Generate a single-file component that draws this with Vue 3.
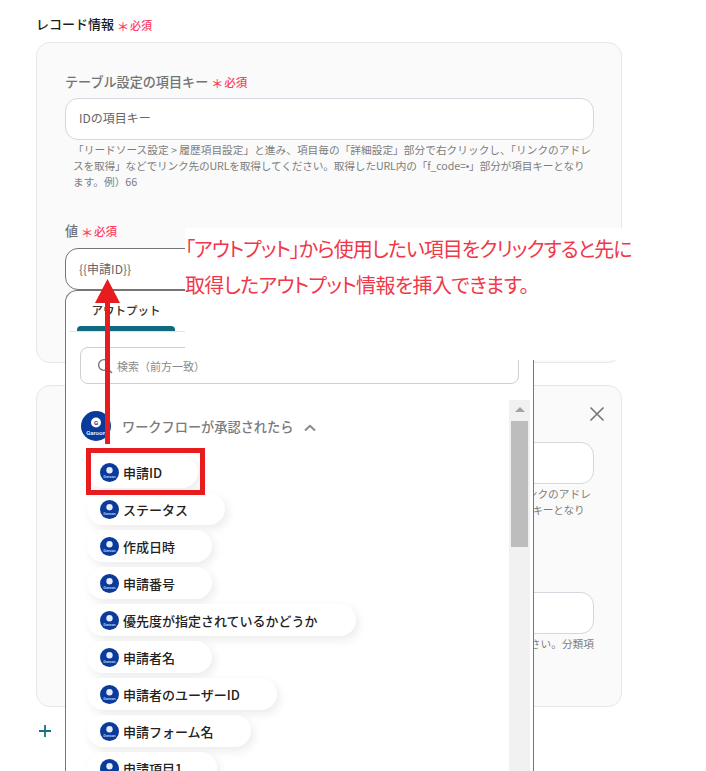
<script setup>
const helpLines = [
  '「リードソース設定 > 履歴項目設定」と進み、項目毎の「詳細設定」部分で右クリックし、「リンクのアドレ',
  'スを取得」などでリンク先のURLを取得してください。取得したURL内の「f_code=•」部分が項目キーとなり',
  'ます。例）66',
]
const pills = [
  { text: '申請ID', w: 111 },
  { text: 'ステータス', w: 138 },
  { text: '作成日時', w: 125 },
  { text: '申請番号', w: 125 },
  { text: '優先度が指定されているかどうか', w: 269 },
  { text: '申請者名', w: 125 },
  { text: '申請者のユーザーID', w: 190 },
  { text: '申請フォーム名', w: 164 },
  { text: '申請項目1', w: 130 },
]
</script>

<template>
  <div class="page">
    <div class="title">レコード情報<span class="req"><i>＊</i>必須</span></div>
    <section class="card">
      <div class="label">テーブル設定の項目キー<span class="req"><i>＊</i>必須</span></div>
      <div class="input">IDの項目キー</div>
      <p class="help"><span v-for="l in helpLines" :key="l">{{ l }}</span></p>
      <div class="label second">値<span class="req"><i>＊</i>必須</span></div>
      <div class="input focused">{{ '{' + '{申請ID}' + '}' }}</div>
    </section>

    <section class="card card2">
      <svg class="close" width="16" height="16" viewBox="0 0 16 16"><path d="M1.5 1.5 14.5 14.5M14.5 1.5 1.5 14.5" stroke="#757575" stroke-width="1.6" fill="none"/></svg>
      <div class="input"></div>
      <p class="help"><span v-for="l in helpLines" :key="l">{{ l }}</span></p>
      <div class="input in3"></div>
      <p class="help h3">分類項目の値を入力してください。分類項</p>
    </section>

    <svg class="plus" width="14" height="14" viewBox="0 0 14 14"><path d="M7 1V13M1 7H13" stroke="#1a6f80" stroke-width="1.8" fill="none"/></svg>

    <div class="dropdown">
      <div class="tab"><span>アウトプット</span></div>
      <div class="search">
        <svg width="16" height="16" viewBox="0 0 16 16"><circle cx="7" cy="7" r="5.4" stroke="#777" stroke-width="1.4" fill="none"/><path d="M11 11 15 15" stroke="#777" stroke-width="1.4"/></svg>
        <span>検索（前方一致）</span>
      </div>
      <div class="list">
        <div class="group">
          <svg class="logo big" viewBox="0 0 30 30"><circle cx="15" cy="15" r="15" fill="#0a3a9c"/><circle cx="15" cy="11.5" r="5" fill="#fff"/><text x="15" y="13.5" text-anchor="middle" font-size="6" font-weight="700" fill="#0a3a9c" font-family="Roboto, sans-serif">G</text><text x="15" y="24" text-anchor="middle" font-size="6" fill="#fff" font-family="Roboto, sans-serif">Garoon</text></svg>
          <span>ワークフローが承認されたら</span>
          <svg class="chev" width="12" height="8" viewBox="0 0 12 8"><path d="M1 6.5 6 1.8 11 6.5" stroke="#888" stroke-width="2" fill="none"/></svg>
        </div>
        <div class="pills">
          <div v-for="p in pills" :key="p.text" class="pill" :style="{ width: p.w + 'px' }">
            <svg class="logo" viewBox="0 0 30 30"><circle cx="15" cy="15" r="15" fill="#0a3a9c"/><circle cx="15" cy="11.5" r="5" fill="#e8ecf6"/><text x="15" y="24" text-anchor="middle" font-size="6" fill="#cdd6ee" font-family="Roboto, sans-serif">Garoon</text></svg>
            <span>{{ p.text }}</span>
          </div>
        </div>
        <div class="scrollbar">
          <div class="up"></div>
          <div class="thumb"></div>
        </div>
      </div>
    </div>

    <div class="note">
      <div class="l1">「アウトプット」から使用したい項目をクリックすると先に</div>
      <div class="l2">取得したアウトプット情報を挿入できます。</div>
    </div>

    <div class="redbox"></div>
    <svg class="arrow" width="26" height="166" viewBox="0 0 26 166"><path d="M10 24H15V165H10Z" fill="#e71c1f"/><path d="M12.5 0 25 24H0Z" fill="#e71c1f"/></svg>
  </div>
</template>

<style scoped>
.page {
  position: relative;
  width: 706px;
  height: 771px;
  overflow: hidden;
  background: #fff;
  padding: 15px 0 0 36px;
  box-sizing: border-box;
  font-family: "Noto Sans CJK JP", "Noto Sans", sans-serif;
  color: #333;
}
.title {
  font-size: 13px;
  font-weight: 500;
  line-height: 18px;
  color: #1c1c1c;
  height: 27px;
  display: flex;
  align-items: flex-start;
}
.req {
  color: #ff3d5e;
  font-size: 11px;
  font-weight: 500;
  margin-left: 3px;
  line-height: 18px;
  padding-top: 1px;
}
.req i {
  font-style: normal;
  display: inline-block;
  margin-right: 1px;
  font-size: 12px;
  position: relative;
  top: 2px;
}
.card {
  position: relative;
  width: 586px;
  height: 321px;
  box-sizing: border-box;
  border: 1px solid #e6e7ea;
  border-radius: 14px;
  background: #fafafa;
  padding: 29px 28px 0;
}
.card2 {
  height: 322px;
  margin-top: 22px;
  padding-top: 56px;
}
.label {
  font-size: 13.1px;
  font-weight: 500;
  line-height: 20px;
  color: #737373;
  display: flex;
  height: 26px;
}
.label .req { font-size: 11.5px; }
.label.second { margin-top: 31px; height: 27px; }
.input {
  width: 529px;
  height: 42px;
  box-sizing: border-box;
  border: 1px solid #d3d7de;
  border-radius: 13px;
  background: #fff;
  padding: 0 13px;
  font-size: 12px;
  line-height: 38px;
  color: #666;
}
.input.focused { border-color: #757575; line-height: 40px; }
.help {
  margin: 2px 0 0;
  padding-left: 8px;
  height: 48px;
  font-size: 10.7px;
  line-height: 16px;
  color: #7d7d7d;
  white-space: nowrap;
}
.help span { display: block; }
.help span:nth-child(2) { letter-spacing: -0.17px; }
.in3 { margin-top: 58px; }
.h3 { text-align: right; width: 529px; padding: 0; height: 16px; }
.close { position: absolute; right: 16px; top: 20px; }
.plus { position: absolute; left: 38px; top: 724px; }

.dropdown {
  position: absolute;
  left: 65px;
  top: 290px;
  width: 469px;
  height: 500px;
  box-sizing: border-box;
  background: #fff;
  border: 1px solid #757575;
  border-bottom: 0;
  border-radius: 12px 12px 0 0;
}
.tab {
  height: 40px;
  margin: 0 3px;
  border-bottom: 1px solid #e4e4e4;
}
.tab span {
  display: block;
  position: relative;
  width: 98px;
  margin-left: 8px;
  height: 40px;
  text-align: center;
  line-height: 38px;
  font-size: 11.5px;
  font-weight: 500;
  color: #333;
}
.tab span::after {
  content: "";
  position: absolute;
  left: 0;
  right: 0;
  bottom: 0;
  height: 5px;
  background: #0f6a80;
  border-radius: 4px 4px 0 0;
}
.search {
  margin: 15px 0 0 14px;
  width: 439px;
  height: 37px;
  box-sizing: border-box;
  border: 1px solid #cfcfcf;
  border-radius: 8px;
  display: flex;
  align-items: center;
  gap: 4px;
  padding-left: 16px;
  font-size: 11px;
  color: #8a8a8a;
}
.list { position: relative; }
.group {
  display: flex;
  align-items: center;
  margin: 27px 0 0 15px;
  height: 30px;
  font-size: 13.2px;
  font-weight: 500;
  color: #7a7a7a;
}
.group span { margin-left: 11px; margin-right: 11px; }
.chev { position: relative; top: 2px; }
.logo { width: 19px; height: 19px; flex: none; }
.logo.big { width: 30px; height: 30px; }
.pills {
  margin: 15px 0 0 21px;
  display: flex;
  flex-direction: column;
  gap: 5px;
}
.pill {
  height: 32px;
  box-sizing: border-box;
  border-radius: 16px;
  background: #fff;
  box-shadow: 3px 4px 10px rgba(0, 0, 0, 0.08);
  display: flex;
  align-items: center;
  padding-left: 13px;
  gap: 4px;
  font-size: 13px;
  font-weight: 500;
  color: #222;
  white-space: nowrap;
}
.scrollbar {
  position: absolute;
  left: 443px;
  top: 15px;
  margin-top: 0;
  width: 21px;
  height: 400px;
  background: #f1f1f1;
  transform: translateY(-26px);
}
.up {
  width: 0;
  height: 0;
  margin: 7px auto 0;
  border-left: 5px solid transparent;
  border-right: 5px solid transparent;
  border-bottom: 5px solid #a3a3a3;
}
.thumb {
  width: 17px;
  height: 126px;
  margin: 9px auto 0;
  background: #bdbdbd;
}
.note {
  position: absolute;
  left: 185px;
  top: 228px;
  width: 455px;
  height: 132px;
  background: #fff;
  color: #f0384a;
  font-size: 20px;
  line-height: 36px;
  padding-top: 3px;
  box-sizing: border-box;
  font-feature-settings: "palt";
  white-space: nowrap;
}
.l1 { letter-spacing: -0.96px; }
.l2 { letter-spacing: -0.65px; }
.redbox {
  position: absolute;
  left: 86px;
  top: 448px;
  width: 119px;
  height: 47px;
  box-sizing: border-box;
  border: 5px solid #e71c1f;
}
.arrow { position: absolute; left: 95px; top: 279px; }
</style>

<style>
html, body { margin: 0; background: #fff; overflow: hidden; }
</style>
